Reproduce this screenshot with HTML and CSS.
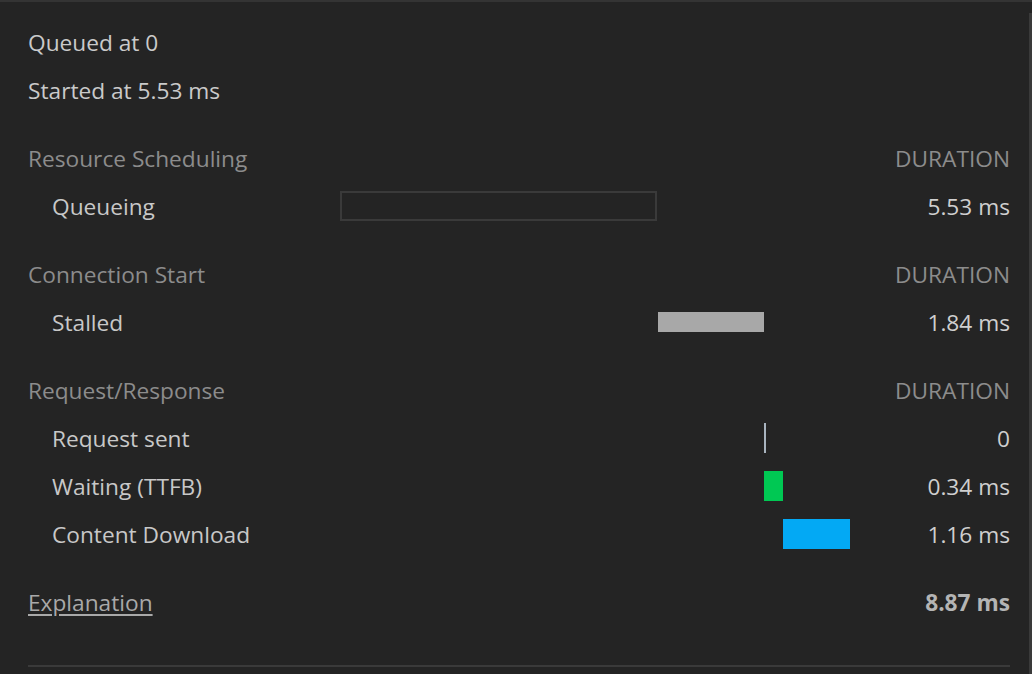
FILE: index.html
```html
<!DOCTYPE html>
<html>
<head>
<meta charset="utf-8">
<link rel="stylesheet" href="styles.css">
</head>
<body>
<div class="frame">
  <div class="panel">
    <div class="timing">
      <div class="row"><div class="info">Queued at 0</div></div>
      <div class="row"><div class="info">Started at 5.53 ms</div></div>

      <div class="row section"><div class="head">Resource Scheduling</div><div></div><div class="head right">DURATION</div></div>
      <div class="row"><div class="label">Queueing</div><div class="track"><span class="bar queueing" style="left:0;width:317px"></span></div><div class="value">5.53 ms</div></div>

      <div class="row section"><div class="head">Connection Start</div><div></div><div class="head right">DURATION</div></div>
      <div class="row"><div class="label">Stalled</div><div class="track"><span class="bar stalled" style="left:318px;width:106px"></span></div><div class="value">1.84 ms</div></div>

      <div class="row section"><div class="head">Request/Response</div><div></div><div class="head right">DURATION</div></div>
      <div class="row"><div class="label">Request sent</div><div class="track"><span class="bar sent" style="left:424px;width:2px"></span></div><div class="value">0</div></div>
      <div class="row"><div class="label">Waiting (TTFB)</div><div class="track"><span class="bar waiting" style="left:424px;width:19px"></span></div><div class="value">0.34 ms</div></div>
      <div class="row"><div class="label">Content Download</div><div class="track"><span class="bar download" style="left:443px;width:67px"></span></div><div class="value">1.16 ms</div></div>

      <div class="row section"><div class="head"><a class="link" href="#">Explanation</a></div><div></div><div class="total">8.87 ms</div></div>
    </div>
    <div class="divider"></div>
  </div>
</div>
</body>
</html>
```
FILE: styles.css
```css
html, body {
  margin: 0;
  padding: 0;
  background: #242424;
  height: 100%;
  overflow: hidden;
}
body {
  font-family: "Open Sans", "Noto Sans", sans-serif;
  font-size: 22.7px;
  color: #cdcdcd;
}
.frame {
  border-top: 2px solid #343434;
  height: 672px;
}
.panel {
  margin-top: 11px;
  border-right: 3px solid #3a3a3a;
  height: 661px;
  box-sizing: border-box;
  padding: 5px 19px 0 28px;
}
.timing {
  display: grid;
  grid-template-columns: 312px 510px 1fr;
}
.row {
  display: contents;
}
.row > div {
  height: 48px;
  display: flex;
  align-items: center;
  white-space: nowrap;
}
.row.section > div {
  height: 68px;
  padding-top: 20px;
  box-sizing: border-box;
}
.info {
  grid-column: 1 / 4;
  color: #cacaca;
}
.head {
  color: #8c8c8c;
}
.right {
  justify-content: flex-end;
}
.label {
  padding-left: 24px;
  color: #c8c8c8;
}
.value {
  justify-content: flex-end;
  color: #cfcfcf;
}
.total {
  justify-content: flex-end;
  font-weight: 700;
  color: #b4b4b4;
}
.link {
  color: #a9a9a9;
  text-decoration: underline;
  text-underline-offset: 3px;
}
.track {
  position: relative;
}
.bar {
  position: absolute;
  top: 50%;
  transform: translateY(-50%);
}
.queueing {
  height: 30px;
  box-sizing: border-box;
  border: 2px solid #3a3a3a;
}
.stalled {
  height: 20px;
  background: #a8a8a8;
}
.sent {
  height: 30px;
  background: #a9b4bf;
}
.waiting {
  height: 30px;
  background: #00c853;
}
.download {
  height: 30px;
  background: #03a9f4;
}
.divider {
  margin-top: 39px;
  height: 2px;
  background: #3a3a3a;
}
```
